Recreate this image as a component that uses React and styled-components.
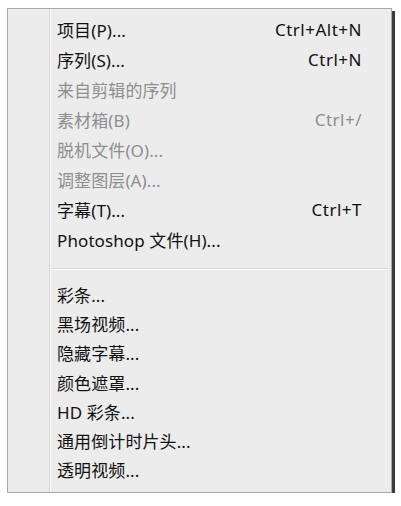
import React from "react";
import styled, { createGlobalStyle } from "styled-components";

const Global = createGlobalStyle`
  html, body { margin: 0; padding: 0; background: #ffffff; }
  body { font-family: "Noto Sans", "Noto Sans CJK SC", sans-serif; }
`;

const Page = styled.div`
  padding: 8px 0 0 7px;
`;

const Menu = styled.div`
  width: 383px;
  box-sizing: content-box;
  border: 1px solid #a9a9a9;
  background: #ececec;
  box-shadow: 3px 3px 0 #3b3b3b;
  position: relative;
  display: flex;
  flex-direction: column;
  padding: 5px 0 8px 0;
`;

const Gutter = styled.div`
  position: absolute;
  top: 0;
  bottom: 0;
  left: 41px;
  width: 1px;
  background: #d6d6d6;
  border-right: 1px solid #fafafa;
`;

const Item = styled.div`
  display: flex;
  align-items: center;
  justify-content: space-between;
  height: ${(p) => p.$h}px;
  padding: 0 29px 0 49px;
  font-size: 17px;
  color: ${(p) => (p.$disabled ? "#8e8e8e" : "#111111")};
  white-space: nowrap;
`;

const Label = styled.span`
  font-family: "Noto Sans", "Noto Sans CJK SC", sans-serif;
  letter-spacing: 0.1px;
`;

const Shortcut = styled.span`
  font-family: "Noto Sans", sans-serif;
  font-size: 17px;
  letter-spacing: 0.5px;
`;

const Separator = styled.div`
  margin: 14px 3px 10px 42px;
  height: 1px;
  background: #d8d8d8;
  border-bottom: 1px solid #fbfbfb;
`;

const top = [
  { label: "项目(P)...", sc: "Ctrl+Alt+N" },
  { label: "序列(S)...", sc: "Ctrl+N" },
  { label: "来自剪辑的序列", disabled: true },
  { label: "素材箱(B)", sc: "Ctrl+/", disabled: true },
  { label: "脱机文件(O)...", disabled: true },
  { label: "调整图层(A)...", disabled: true },
  { label: "字幕(T)...", sc: "Ctrl+T" },
  { label: "Photoshop 文件(H)..." },
];

const bottom = [
  { label: "彩条..." },
  { label: "黑场视频..." },
  { label: "隐藏字幕..." },
  { label: "颜色遮罩..." },
  { label: "HD 彩条..." },
  { label: "通用倒计时片头..." },
  { label: "透明视频..." },
];

export default function App() {
  return (
    <Page>
      <Global />
      <Menu>
        <Gutter />
        {top.map((it) => (
          <Item key={it.label} $h={30} $disabled={it.disabled}>
            <Label>{it.label}</Label>
            {it.sc && <Shortcut>{it.sc}</Shortcut>}
          </Item>
        ))}
        <Separator />
        {bottom.map((it) => (
          <Item key={it.label} $h={29.2} $disabled={it.disabled}>
            <Label>{it.label}</Label>
          </Item>
        ))}
      </Menu>
    </Page>
  );
}
